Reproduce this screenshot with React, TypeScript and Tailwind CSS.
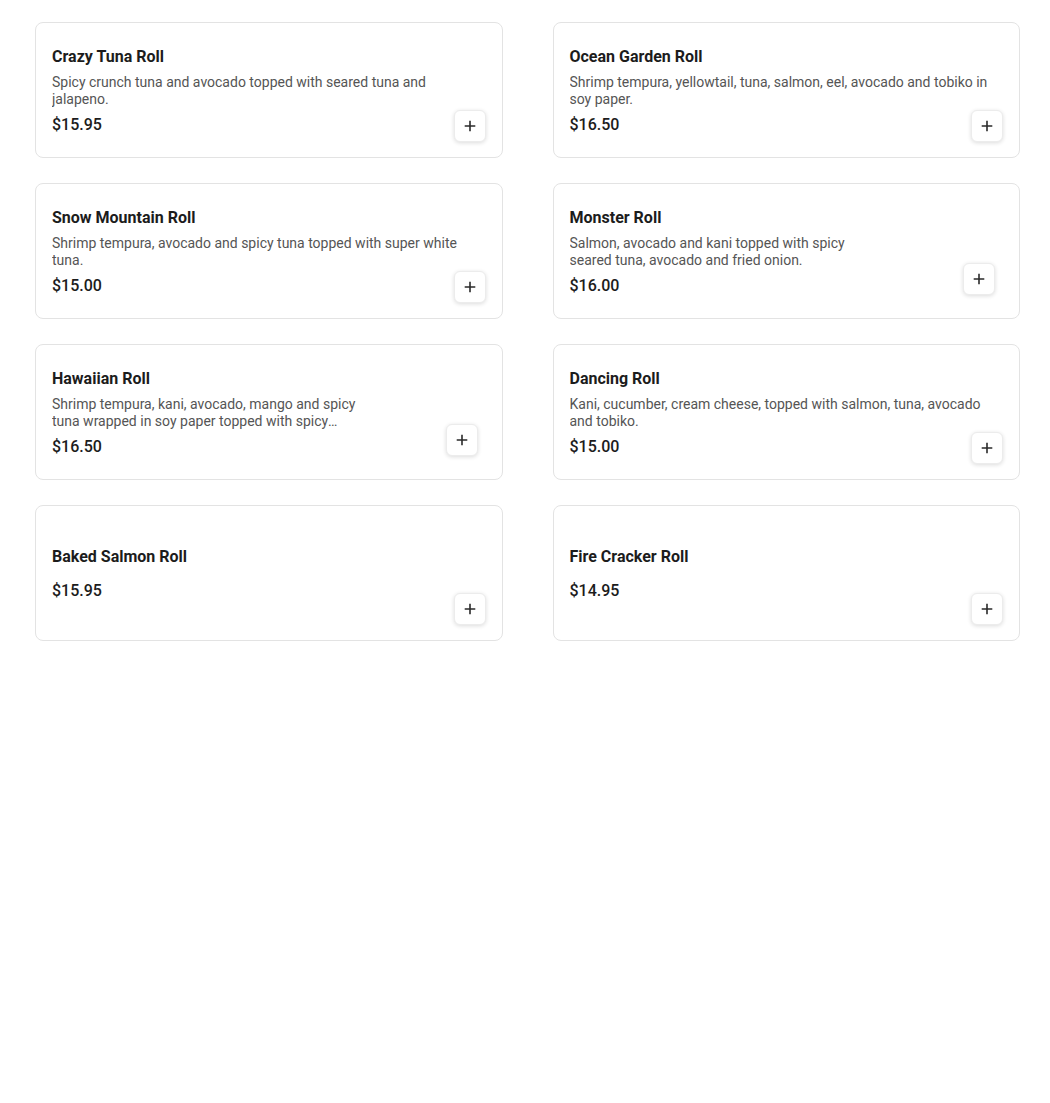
import React from 'react';

type Item = {
  name: string;
  description?: string;
  price: string;
  image?: boolean;
};

const ITEMS: Item[] = [
  { name: 'Crazy Tuna Roll', description: 'Spicy crunch tuna and avocado topped with seared tuna and jalapeno.', price: '$15.95' },
  { name: 'Ocean Garden Roll', description: 'Shrimp tempura, yellowtail, tuna, salmon, eel, avocado and tobiko in soy paper.', price: '$16.50' },
  { name: 'Snow Mountain Roll', description: 'Shrimp tempura, avocado and spicy tuna topped with super white tuna.', price: '$15.00' },
  { name: 'Monster Roll', description: 'Salmon, avocado and kani topped with spicy seared tuna, avocado and fried onion.', price: '$16.00', image: true },
  { name: 'Hawaiian Roll', description: 'Shrimp tempura, kani, avocado, mango and spicy tuna wrapped in soy paper topped with spicy mayonnaise, eel sauce and crunch.', price: '$16.50', image: true },
  { name: 'Dancing Roll', description: 'Kani, cucumber, cream cheese, topped with salmon, tuna, avocado and tobiko.', price: '$15.00' },
  { name: 'Baked Salmon Roll', price: '$15.95' },
  { name: 'Fire Cracker Roll', price: '$14.95' },
];

const PlusIcon = () => (
  <svg width="12" height="12" viewBox="0 0 12 12" fill="none" stroke="#2a2a2a" strokeWidth="1.6" strokeLinecap="square">
    <path d="M6 1.5v9M1.5 6h9" />
  </svg>
);

const AddButton: React.FC<{ inset?: boolean }> = ({ inset }) => (
  <button
    aria-label="Add"
    className={`absolute flex h-8 w-8 items-center justify-center rounded-md border border-[#ececec] bg-white shadow-[0_1px_4px_rgba(0,0,0,0.14)] ${
      inset ? 'bottom-[23px] right-[24px]' : 'bottom-[15px] right-[16px]'
    }`}
  >
    <PlusIcon />
  </button>
);

const MenuCard: React.FC<{ item: Item }> = ({ item }) => (
  <div className="relative flex h-[136px] items-center rounded-lg border border-[#e3e3e3] bg-white px-4">
    <div className={`flex flex-col pt-[2px] ${item.image ? 'w-[308px]' : 'w-full'}`}>
      <h3 className="text-[16px] font-bold leading-5 text-[#1c1c1c]">{item.name}</h3>
      <p className="mt-[7px] mb-[7px] line-clamp-2 text-[14px] leading-[17px] text-[#555555]">
        {item.description ?? ''}
      </p>
      <span className="text-[16px] font-medium leading-5 text-[#1c1c1c]">{item.price}</span>
    </div>
    <AddButton inset={item.image} />
  </div>
);

export default function App() {
  return (
    <div
      className="min-h-[1103px] bg-white pl-[35px] pr-[30px] pt-[22px]"
      style={{ fontFamily: 'Roboto, "Liberation Sans", sans-serif' }}
    >
      <div className="grid grid-cols-2 gap-x-[50px] gap-y-[25px]">
        {ITEMS.map((item) => (
          <MenuCard key={item.name} item={item} />
        ))}
      </div>
    </div>
  );
}
